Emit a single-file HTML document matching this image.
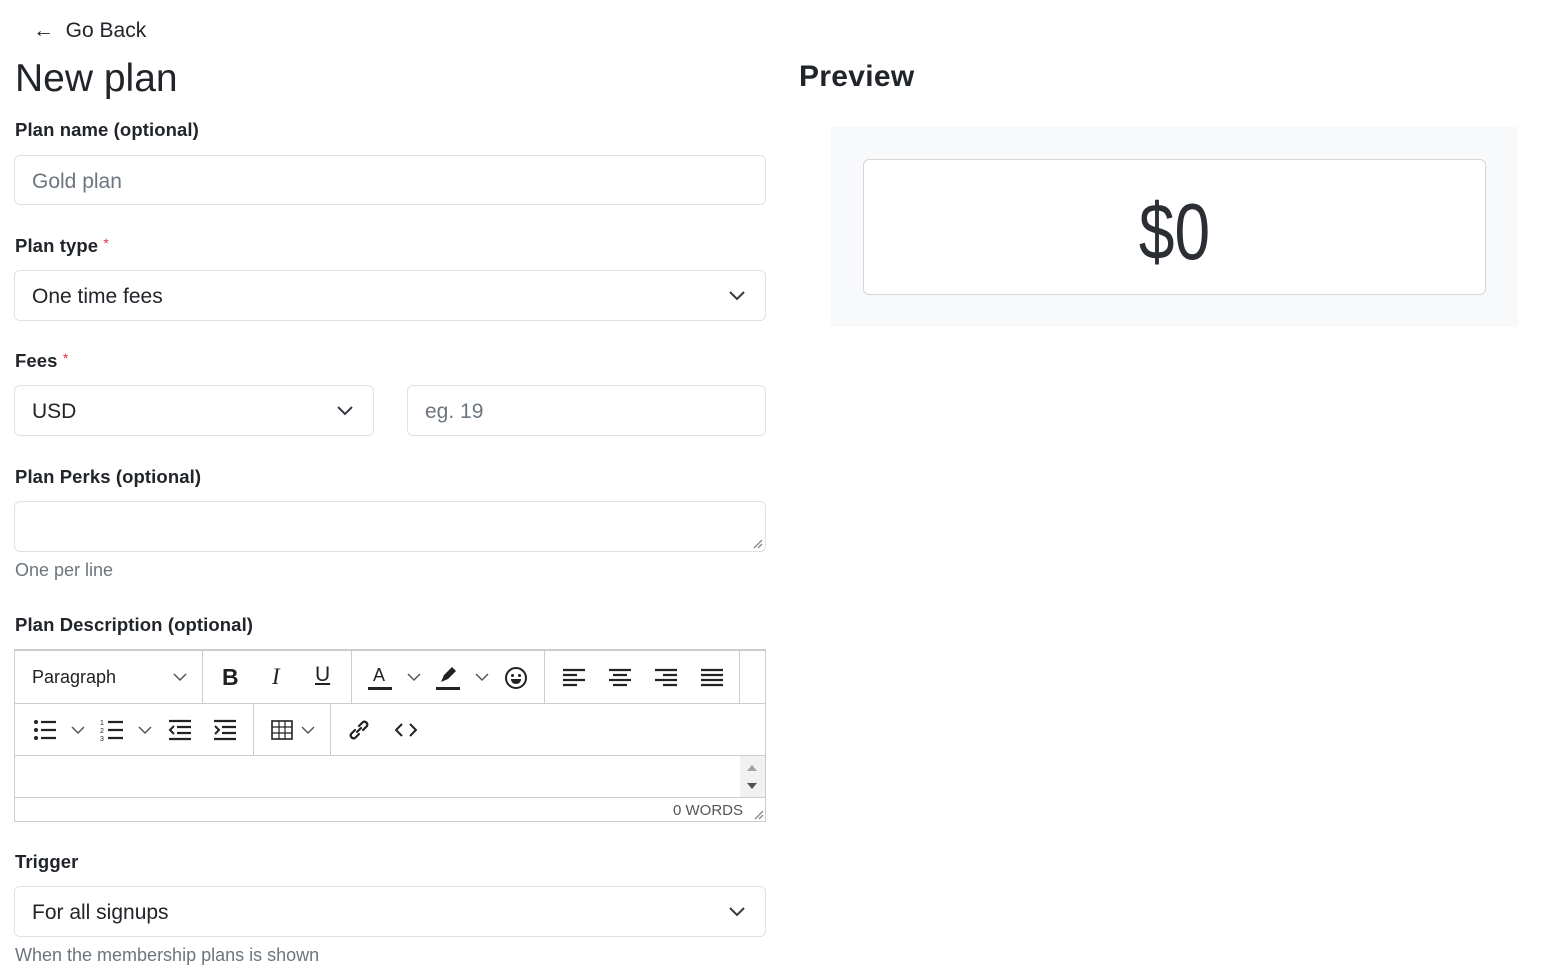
<!DOCTYPE html>
<html><head><meta charset="utf-8"><style>
*{box-sizing:border-box;margin:0;padding:0}
body{width:1560px;height:976px;background:#fff;font-family:"Liberation Sans",sans-serif;color:#212529;position:relative;overflow:hidden}
.a{position:absolute}
.lbl{position:absolute;left:15px;font-weight:bold;font-size:18.5px;color:#212529;letter-spacing:0.1px}
.lbl .r{color:#dc3545;font-weight:normal;font-size:14px;vertical-align:top}
.inp{position:absolute;border:1px solid #dee2e6;border-radius:6px;background:#fff;font-size:21px;padding-left:17px;padding-top:3px;display:flex;align-items:center}
.ph{color:#6c757d}
.chev{position:absolute;right:20px;top:50%;margin-top:-5px}
.help{position:absolute;left:15px;font-size:18px;color:#6c757d}
.tb{position:absolute;border-right:1px solid #ccc;top:0;height:100%}
.ic{position:absolute}
</style></head><body>
<div class="a" style="left:33px;top:19px;font-size:21px;color:#212529">←&nbsp; Go Back</div>
<div class="a" style="left:15px;top:57px;font-size:39px;color:#212529">New plan</div>
<div class="a" style="left:799px;top:60px;font-size:30px;font-weight:bold;color:#212529;letter-spacing:0.3px">Preview</div>

<div class="lbl" style="top:119px">Plan name (optional)</div>
<div class="inp" style="left:14px;top:155px;width:752px;height:50px"><span class="ph">Gold plan</span></div>

<div class="lbl" style="top:235px">Plan type <span class="r">*</span></div>
<div class="inp" style="left:14px;top:270px;width:752px;height:51px">One time fees
<svg class="chev" width="16" height="10" viewBox="0 0 16 10"><path d="M1 1l7 7 7-7" fill="none" stroke="#343a40" stroke-width="2"/></svg></div>

<div class="lbl" style="top:350px">Fees <span class="r">*</span></div>
<div class="inp" style="left:14px;top:385px;width:360px;height:51px">USD
<svg class="chev" width="16" height="10" viewBox="0 0 16 10"><path d="M1 1l7 7 7-7" fill="none" stroke="#343a40" stroke-width="2"/></svg></div>
<div class="inp" style="left:407px;top:385px;width:359px;height:51px"><span class="ph">eg. 19</span></div>

<div class="lbl" style="top:466px">Plan Perks (optional)</div>
<div class="inp" style="left:14px;top:501px;width:752px;height:51px">
<svg class="a" style="right:2px;bottom:2px" width="12" height="12" viewBox="0 0 12 12"><path d="M11 3L3 11M11 7L7 11" stroke="#777" stroke-width="1.2"/></svg></div>
<div class="help" style="top:560px">One per line</div>

<div class="lbl" style="top:614px">Plan Description (optional)</div>
<div class="a" style="left:14px;top:649px;width:752px;height:173px;border:1px solid #ccc;border-top:2px solid #ccc">
 <div class="a" style="left:0;top:0;width:750px;height:53px;border-bottom:1px solid #ccc">
  <div class="a" style="left:17px;top:16px;font-size:18px;color:#222">Paragraph</div>
  <svg class="ic" style="left:158px;top:22px" width="14" height="9" viewBox="0 0 14 9"><path d="M1 1l6 6 6-6" fill="none" stroke="#555" stroke-width="1.5"/></svg>
  <div class="tb" style="left:187px"></div>
  <div class="a" style="left:207px;top:13px;font-size:23px;font-weight:bold;color:#222">B</div>
  <div class="a" style="left:257px;top:13px;font-size:23px;font-style:italic;font-family:'Liberation Serif',serif;color:#222">I</div>
  <div class="a" style="left:300px;top:12px;font-size:21px;text-decoration:underline;color:#222">U</div>
  <div class="tb" style="left:336px"></div>
  <div class="a" style="left:358px;top:14px;font-size:18px;color:#222">A</div>
  <div class="a" style="left:353px;top:36px;width:24px;height:3px;background:#222"></div>
  <svg class="ic" style="left:392px;top:22px" width="14" height="9" viewBox="0 0 14 9"><path d="M1 1l6 6 6-6" fill="none" stroke="#555" stroke-width="1.5"/></svg>
  <svg class="ic" style="left:422px;top:14px" width="24" height="20" viewBox="0 0 24 20"><path d="M4 17l3-7 8-8 4 4-8 8z" fill="#222"/></svg>
  <div class="a" style="left:421px;top:36px;width:24px;height:3px;background:#222"></div>
  <svg class="ic" style="left:460px;top:22px" width="14" height="9" viewBox="0 0 14 9"><path d="M1 1l6 6 6-6" fill="none" stroke="#555" stroke-width="1.5"/></svg>
  <svg class="ic" style="left:489px;top:15px" width="24" height="24" viewBox="0 0 24 24"><circle cx="12" cy="12" r="10" fill="none" stroke="#222" stroke-width="2"/><circle cx="8.5" cy="9.5" r="1.5" fill="#222"/><circle cx="15.5" cy="9.5" r="1.5" fill="#222"/><path d="M7 13h10c0 3-2 5-5 5s-5-2-5-5z" fill="#222"/></svg>
  <div class="tb" style="left:529px"></div>
  <svg class="ic" style="left:547px;top:17px" width="24" height="20" viewBox="0 0 24 20"><path d="M1 2h22M1 7h14M1 12h22M1 17h14" stroke="#222" stroke-width="2.2"/></svg>
  <svg class="ic" style="left:593px;top:17px" width="24" height="20" viewBox="0 0 24 20"><path d="M1 2h22M5 7h14M1 12h22M5 17h14" stroke="#222" stroke-width="2.2"/></svg>
  <svg class="ic" style="left:639px;top:17px" width="24" height="20" viewBox="0 0 24 20"><path d="M1 2h22M9 7h14M1 12h22M9 17h14" stroke="#222" stroke-width="2.2"/></svg>
  <svg class="ic" style="left:685px;top:17px" width="24" height="20" viewBox="0 0 24 20"><path d="M1 2h22M1 7h22M1 12h22M1 17h22" stroke="#222" stroke-width="2.2"/></svg>
  <div class="tb" style="left:724px"></div>
 </div>
 <div class="a" style="left:0;top:53px;width:750px;height:52px;border-bottom:1px solid #ccc">
  <svg class="ic" style="left:18px;top:15px" width="24" height="22" viewBox="0 0 24 22"><path d="M8 3h15M8 11h15M8 19h15" stroke="#222" stroke-width="2.2"/><circle cx="3" cy="3" r="2" fill="#222"/><circle cx="3" cy="11" r="2" fill="#222"/><circle cx="3" cy="19" r="2" fill="#222"/></svg>
  <svg class="ic" style="left:56px;top:22px" width="14" height="9" viewBox="0 0 14 9"><path d="M1 1l6 6 6-6" fill="none" stroke="#555" stroke-width="1.5"/></svg>
  <svg class="ic" style="left:85px;top:14px" width="24" height="24" viewBox="0 0 24 24"><path d="M8 4h15M8 12h15M8 20h15" stroke="#222" stroke-width="2.2"/><text x="0" y="7" font-size="7" fill="#222" font-family="Liberation Sans">1</text><text x="0" y="15" font-size="7" fill="#222" font-family="Liberation Sans">2</text><text x="0" y="23" font-size="7" fill="#222" font-family="Liberation Sans">3</text></svg>
  <svg class="ic" style="left:123px;top:22px" width="14" height="9" viewBox="0 0 14 9"><path d="M1 1l6 6 6-6" fill="none" stroke="#555" stroke-width="1.5"/></svg>
  <svg class="ic" style="left:153px;top:15px" width="24" height="22" viewBox="0 0 24 22"><path d="M1 2h22M9 8h14M9 14h14M1 20h22" stroke="#222" stroke-width="2.2"/><path d="M6 7l-4 4 4 4" fill="none" stroke="#222" stroke-width="2"/></svg>
  <svg class="ic" style="left:198px;top:15px" width="24" height="22" viewBox="0 0 24 22"><path d="M1 2h22M9 8h14M9 14h14M1 20h22" stroke="#222" stroke-width="2.2"/><path d="M2 7l4 4-4 4" fill="none" stroke="#222" stroke-width="2"/></svg>
  <div class="tb" style="left:238px"></div>
  <svg class="ic" style="left:256px;top:16px" width="22" height="20" viewBox="0 0 22 20"><rect x="1" y="1" width="20" height="18" fill="none" stroke="#222" stroke-width="1.6"/><path d="M1 7h20M1 13h20M8 1v18M14 1v18" stroke="#222" stroke-width="1.2"/></svg>
  <svg class="ic" style="left:286px;top:22px" width="14" height="9" viewBox="0 0 14 9"><path d="M1 1l6 6 6-6" fill="none" stroke="#555" stroke-width="1.5"/></svg>
  <div class="tb" style="left:315px"></div>
  <svg class="ic" style="left:331px;top:13px" width="26" height="26" viewBox="0 0 26 26"><path d="M11 15l4-4M9 13l-4 4a3 3 0 004 4l4-4M17 13l4-4a3 3 0 00-4-4l-4 4" fill="none" stroke="#222" stroke-width="2.2" stroke-linecap="round"/></svg>
  <svg class="ic" style="left:380px;top:18px" width="22" height="16" viewBox="0 0 22 16"><path d="M7 2L1 8l6 6M15 2l6 6-6 6" fill="none" stroke="#222" stroke-width="2"/></svg>
 </div>
 <div class="a" style="left:725px;top:105px;width:25px;height:42px;background:#f1f1f1">
  <svg class="ic" style="left:6px;top:8px" width="12" height="26" viewBox="0 0 12 26"><path d="M1 7l5-6 5 6z" fill="#a0a0a0"/><path d="M1 19l5 6 5-6z" fill="#505050"/></svg>
 </div>
 <div class="a" style="left:0;top:146px;width:750px;height:1px;background:#ccc"></div>
 <div class="a" style="right:22px;top:151px;font-size:15px;color:#555">0 WORDS</div>
 <svg class="ic" style="right:1px;bottom:1px" width="12" height="12" viewBox="0 0 12 12"><path d="M11 3L3 11M11 7L7 11" stroke="#777" stroke-width="1.2"/></svg>
</div>

<div class="lbl" style="top:851px">Trigger</div>
<div class="inp" style="left:14px;top:886px;width:752px;height:51px">For all signups
<svg class="chev" width="16" height="10" viewBox="0 0 16 10"><path d="M1 1l7 7 7-7" fill="none" stroke="#343a40" stroke-width="2"/></svg></div>
<div class="help" style="top:945px">When the membership plans is shown</div>

<div class="a" style="left:831px;top:127px;width:687px;height:200px;background:#f8f9fa">
 <div class="a" style="left:32px;top:32px;width:623px;height:136px;background:#fff;border:1px solid #d6d6d6;border-radius:6px">
  <div class="a" style="left:0;width:100%;top:26px;text-align:center;font-size:80px;color:#2b2f33;transform:scaleX(0.8)">$0</div>
 </div>
</div>
</body></html>
